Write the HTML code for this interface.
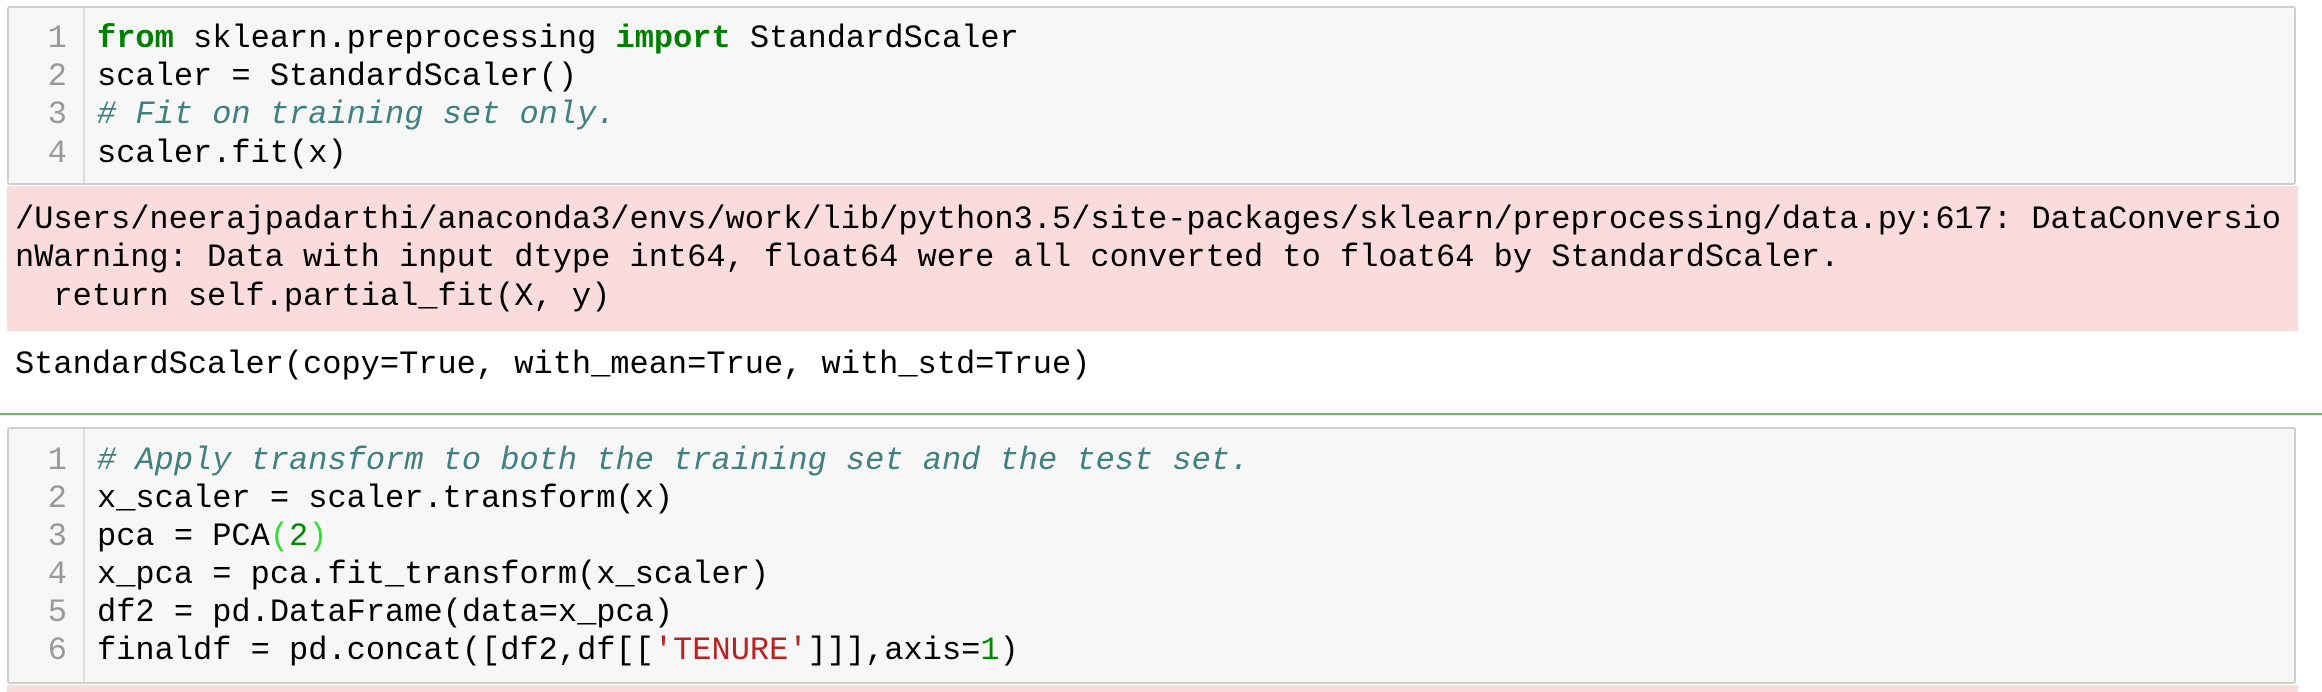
<!DOCTYPE html>
<html><head><meta charset="utf-8"><style>
html,body{margin:0;padding:0;background:#fff;width:2322px;height:692px;overflow:hidden;position:relative}
.m{font-family:"Liberation Mono",monospace;font-size:32px;line-height:38px;white-space:pre;position:absolute;color:#000}
.box{position:absolute;left:7px;width:2289px;background:#f7f7f7;border:2px solid #cfcfcf;border-radius:3px;box-sizing:border-box}
.gut{position:absolute;top:0;bottom:0;left:0;width:74px;border-right:2px solid #ddd;background:#f7f7f7}
.ln{color:#999;width:60px;text-align:right;left:7px}
.k{color:#008000;font-weight:bold}
.c{color:#408080;font-style:italic}
.s{color:#ba2121}
.n{color:#008800}
.b{color:#33dd33}
.pink{position:absolute;left:7px;width:2291px;background:#fadcdc}
</style></head><body>
<div class="box" style="top:6px;height:179px"><div class="gut"></div></div>
<div class="m ln" style="top:20px">1</div>
<div class="m ln" style="top:58px">2</div>
<div class="m ln" style="top:96px">3</div>
<div class="m ln" style="top:135px">4</div>
<div class="m" style="left:97px;top:20px"><span class="k">from</span> sklearn.preprocessing <span class="k">import</span> StandardScaler</div>
<div class="m" style="left:97px;top:58px">scaler = StandardScaler()</div>
<div class="m c" style="left:97px;top:96px"># Fit on training set only.</div>
<div class="m" style="left:97px;top:135px">scaler.fit(x)</div>

<div class="pink" style="top:186px;height:145px"></div>
<div class="m" style="left:15px;top:201px">/Users/neerajpadarthi/anaconda3/envs/work/lib/python3.5/site-packages/sklearn/preprocessing/data.py:617: DataConversio</div>
<div class="m" style="left:15px;top:239px">nWarning: Data with input dtype int64, float64 were all converted to float64 by StandardScaler.</div>
<div class="m" style="left:15px;top:278px">  return self.partial_fit(X, y)</div>
<div class="m" style="left:15px;top:346px">StandardScaler(copy=True, with_mean=True, with_std=True)</div>

<div style="position:absolute;left:0;top:413px;width:2322px;height:2px;background:#66bb6a"></div>

<div class="box" style="top:427px;height:257px"><div class="gut"></div></div>
<div class="m ln" style="top:442px">1</div>
<div class="m ln" style="top:480px">2</div>
<div class="m ln" style="top:518px">3</div>
<div class="m ln" style="top:556px">4</div>
<div class="m ln" style="top:594px">5</div>
<div class="m ln" style="top:632px">6</div>
<div class="m c" style="left:97px;top:442px"># Apply transform to both the training set and the test set.</div>
<div class="m" style="left:97px;top:480px">x_scaler = scaler.transform(x)</div>
<div class="m" style="left:97px;top:518px">pca = PCA<span class="b">(</span><span class="n">2</span><span class="b">)</span></div>
<div class="m" style="left:97px;top:556px">x_pca = pca.fit_transform(x_scaler)</div>
<div class="m" style="left:97px;top:594px">df2 = pd.DataFrame(data=x_pca)</div>
<div class="m" style="left:97px;top:632px">finaldf = pd.concat([df2,df[[<span class="s">'TENURE'</span>]]],axis=<span class="n">1</span>)</div>
<div class="pink" style="top:685px;height:7px"></div>
</body></html>
